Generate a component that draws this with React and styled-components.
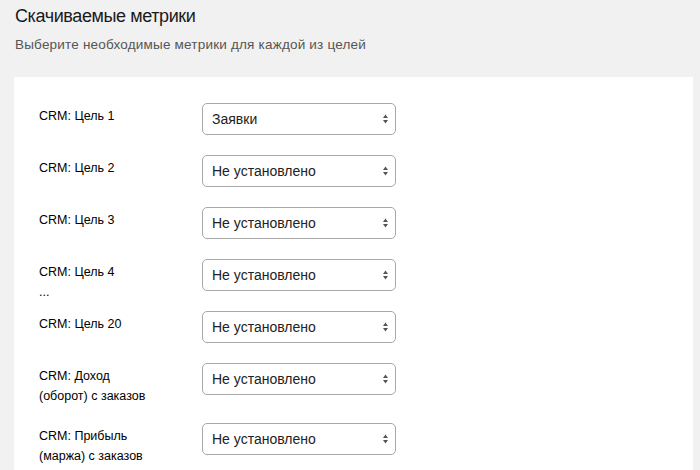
import React from "react";
import styled, { createGlobalStyle } from "styled-components";

const Global = createGlobalStyle`
  html, body { margin: 0; padding: 0; background: #f1f1f1; }
  body { font-family: "Liberation Sans", Arial, sans-serif; overflow: hidden; }
`;

const Page = styled.div`
  padding: 4px 7px 0 14px;
  height: 470px;
  box-sizing: border-box;
`;

const Header = styled.header`
  padding-left: 1px;
`;

const Title = styled.h1`
  margin: 0;
  font-size: 18px;
  letter-spacing: -0.4px;
  line-height: 24px;
  font-weight: 400;
  color: #1a1a1a;
`;

const Subtitle = styled.p`
  margin: 8px 0 0;
  font-size: 13.5px;
  letter-spacing: 0.2px;
  line-height: 18px;
  color: #555;
`;

const Panel = styled.section`
  margin-top: 23px;
  background: #fff;
  padding: 26px 25px 0;
  height: 420px;
`;

const Row = styled.div`
  display: flex;
  align-items: flex-start;
  margin-bottom: 20px;
`;

const Label = styled.div`
  width: 163px;
  flex: none;
  box-sizing: border-box;
  padding-top: 3px;
  font-size: 12.5px;
  line-height: 20px;
  color: #000;
  height: ${(p) => (p.$tall ? "40px" : "32px")};
`;

const SelectBox = styled.div`
  position: relative;
  width: 194px;
  height: 32px;
  box-sizing: border-box;
  border: 1px solid #a8a8a8;
  border-radius: 5px;
  background: #fff;
  display: flex;
  align-items: center;
  padding-left: 9px;
  font-size: 14px;
  color: #222;
`;

const Arrows = styled.svg`
  position: absolute;
  right: 6px;
  top: 50%;
  margin-top: -5px;
`;

const Select = ({ value }) => (
  <SelectBox>
    {value}
    <Arrows width="7" height="10" viewBox="0 0 7 10">
      <path d="M3.5 0.5 L6 4 L1 4 Z" fill="#555" />
      <path d="M1 6 L6 6 L3.5 9.5 Z" fill="#555" />
    </Arrows>
  </SelectBox>
);

const rows = [
  { label: ["CRM: Цель 1"], value: "Заявки" },
  { label: ["CRM: Цель 2"], value: "Не установлено" },
  { label: ["CRM: Цель 3"], value: "Не установлено" },
  { label: ["CRM: Цель 4", "..."], value: "Не установлено" },
  { label: ["CRM: Цель 20"], value: "Не установлено" },
  { label: ["CRM: Доход", "(оборот) с заказов"], value: "Не установлено", tall: true },
  { label: ["CRM: Прибыль", "(маржа) с заказов"], value: "Не установлено", tall: true },
];

export default function App() {
  return (
    <>
      <Global />
      <Page>
        <Header>
          <Title>Скачиваемые метрики</Title>
          <Subtitle>Выберите необходимые метрики для каждой из целей</Subtitle>
        </Header>
        <Panel>
          {rows.map((r, i) => (
            <Row key={i}>
              <Label $tall={r.tall}>
                {r.label.map((l, j) => (
                  <div key={j}>{l}</div>
                ))}
              </Label>
              <Select value={r.value} />
            </Row>
          ))}
        </Panel>
      </Page>
    </>
  );
}
